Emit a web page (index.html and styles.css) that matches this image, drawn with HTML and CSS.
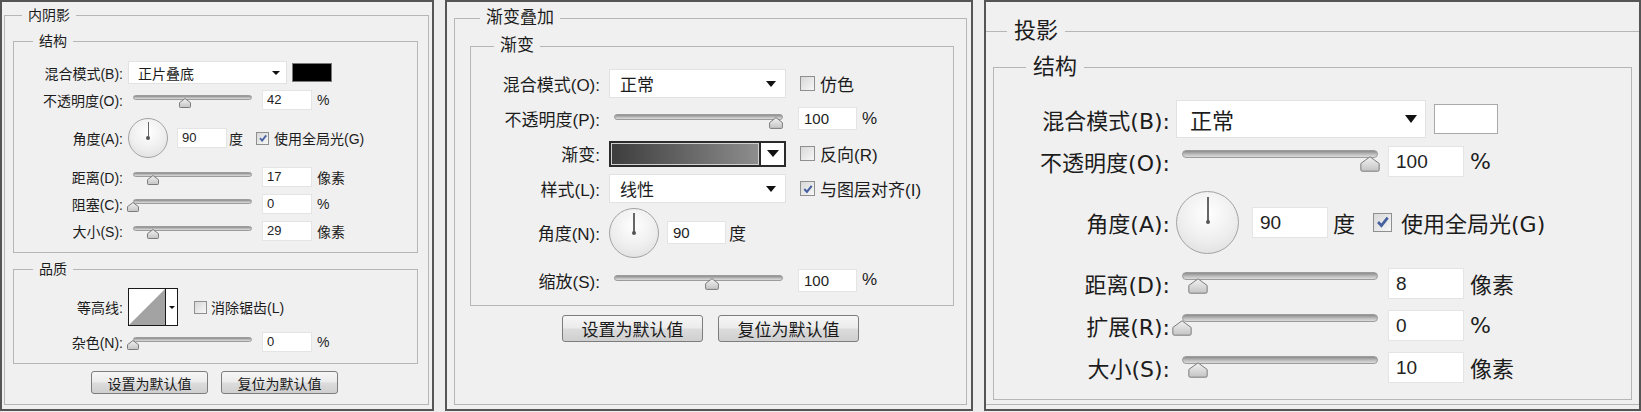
FILE: index.html
```html
<!DOCTYPE html>
<html lang="zh-CN">
<head>
  <meta charset="UTF-8">
  <meta name="viewport" content="width=device-width, initial-scale=1.0">
  <title>图层样式</title>
  <link rel="stylesheet" href="styles.css">
</head>
<body>

  <svg class="defs" width="0" height="0" aria-hidden="true">
    <linearGradient id="thumbFill" x1="0" y1="0" x2="0" y2="1">
      <stop offset="0" stop-color="#f2f2f2"/>
      <stop offset="1" stop-color="#c4c4c4"/>
    </linearGradient>
  </svg>

  <div class="page">

    <!-- 内阴影 -->
    <section class="panel pa">
      <fieldset class="group outer">
        <legend>内阴影</legend>

        <fieldset class="group sub sub-first">
          <legend>结构</legend>
          <div class="row">
            <label class="lbl">混合模式(B):</label>
            <div class="select"><span>正片叠底</span><i class="caret"></i></div>
            <span class="swatch swatch-black"></span>
          </div>
          <div class="row">
            <label class="lbl">不透明度(O):</label>
            <div class="slider"><span class="track"></span><svg class="thumb" style="left:44%" viewBox="0 0 14 12" preserveAspectRatio="none"><path d="M7 0.6 L13.4 5.6 V10.4 Q13.4 11.4 12.4 11.4 H1.6 Q0.6 11.4 0.6 10.4 V5.6 Z"/></svg></div>
            <span class="num">42</span><span class="unit">%</span>
          </div>
          <div class="row row-dial">
            <label class="lbl">角度(A):</label>
            <span class="dial"></span>
            <span class="num num-angle">90</span><span class="unit unit-deg">度</span>
            <span class="chk"><svg viewBox="0 0 10 10"><path d="M2 5.2 L4.2 7.6 L8.3 2.4"/></svg></span><span class="chk-text">使用全局光(G)</span>
          </div>
          <div class="row">
            <label class="lbl">距离(D):</label>
            <div class="slider"><span class="track"></span><svg class="thumb" style="left:17%" viewBox="0 0 14 12" preserveAspectRatio="none"><path d="M7 0.6 L13.4 5.6 V10.4 Q13.4 11.4 12.4 11.4 H1.6 Q0.6 11.4 0.6 10.4 V5.6 Z"/></svg></div>
            <span class="num">17</span><span class="unit">像素</span>
          </div>
          <div class="row">
            <label class="lbl">阻塞(C):</label>
            <div class="slider"><span class="track"></span><svg class="thumb" style="left:0%" viewBox="0 0 14 12" preserveAspectRatio="none"><path d="M7 0.6 L13.4 5.6 V10.4 Q13.4 11.4 12.4 11.4 H1.6 Q0.6 11.4 0.6 10.4 V5.6 Z"/></svg></div>
            <span class="num">0</span><span class="unit">%</span>
          </div>
          <div class="row">
            <label class="lbl">大小(S):</label>
            <div class="slider"><span class="track"></span><svg class="thumb" style="left:17%" viewBox="0 0 14 12" preserveAspectRatio="none"><path d="M7 0.6 L13.4 5.6 V10.4 Q13.4 11.4 12.4 11.4 H1.6 Q0.6 11.4 0.6 10.4 V5.6 Z"/></svg></div>
            <span class="num">29</span><span class="unit">像素</span>
          </div>
        </fieldset>

        <fieldset class="group sub sub-quality">
          <legend>品质</legend>
          <div class="row row-contour">
            <label class="lbl">等高线:</label>
            <div class="contour">
              <svg class="contour-curve" viewBox="0 0 36 36" preserveAspectRatio="none"><polygon points="0,36 36,0 36,36" fill="#a3a3a3"/></svg>
              <span class="contour-drop"><i class="caret"></i></span>
            </div>
            <span class="chk chk-off chk-contour"></span><span class="chk-text chk-text-contour">消除锯齿(L)</span>
          </div>
          <div class="row">
            <label class="lbl">杂色(N):</label>
            <div class="slider"><span class="track"></span><svg class="thumb" style="left:0%" viewBox="0 0 14 12" preserveAspectRatio="none"><path d="M7 0.6 L13.4 5.6 V10.4 Q13.4 11.4 12.4 11.4 H1.6 Q0.6 11.4 0.6 10.4 V5.6 Z"/></svg></div>
            <span class="num">0</span><span class="unit">%</span>
          </div>
        </fieldset>

        <div class="buttons">
          <button class="btn">设置为默认值</button>
          <button class="btn">复位为默认值</button>
        </div>
      </fieldset>
    </section>

    <!-- 渐变叠加 -->
    <section class="panel pb">
      <fieldset class="group outer">
        <legend>渐变叠加</legend>

        <fieldset class="group sub sub-first">
          <legend>渐变</legend>
          <div class="row">
            <label class="lbl">混合模式(O):</label>
            <div class="select"><span>正常</span><i class="caret"></i></div>
            <span class="chk chk-off"></span><span class="chk-text">仿色</span>
          </div>
          <div class="row">
            <label class="lbl">不透明度(P):</label>
            <div class="slider"><span class="track"></span><svg class="thumb" style="left:96%" viewBox="0 0 14 12" preserveAspectRatio="none"><path d="M7 0.6 L13.4 5.6 V10.4 Q13.4 11.4 12.4 11.4 H1.6 Q0.6 11.4 0.6 10.4 V5.6 Z"/></svg></div>
            <span class="num">100</span><span class="unit">%</span>
          </div>
          <div class="row">
            <label class="lbl">渐变:</label>
            <div class="grad"><span class="grad-bar"></span><span class="grad-drop"><i class="caret"></i></span></div>
            <span class="chk chk-off"></span><span class="chk-text">反向(R)</span>
          </div>
          <div class="row">
            <label class="lbl">样式(L):</label>
            <div class="select"><span>线性</span><i class="caret"></i></div>
            <span class="chk"><svg viewBox="0 0 10 10"><path d="M2 5.2 L4.2 7.6 L8.3 2.4"/></svg></span><span class="chk-text">与图层对齐(I)</span>
          </div>
          <div class="row row-dial">
            <label class="lbl">角度(N):</label>
            <span class="dial"></span>
            <span class="num num-angle">90</span><span class="unit unit-deg">度</span>
          </div>
          <div class="row row-loose">
            <label class="lbl">缩放(S):</label>
            <div class="slider"><span class="track"></span><svg class="thumb" style="left:58%" viewBox="0 0 14 12" preserveAspectRatio="none"><path d="M7 0.6 L13.4 5.6 V10.4 Q13.4 11.4 12.4 11.4 H1.6 Q0.6 11.4 0.6 10.4 V5.6 Z"/></svg></div>
            <span class="num">100</span><span class="unit">%</span>
          </div>
        </fieldset>

        <div class="buttons">
          <button class="btn">设置为默认值</button>
          <button class="btn">复位为默认值</button>
        </div>
      </fieldset>
    </section>

    <!-- 投影 -->
    <section class="panel pc">
      <fieldset class="group outer">
        <legend>投影</legend>

        <fieldset class="group sub sub-first">
          <legend>结构</legend>
          <div class="row">
            <label class="lbl">混合模式(B):</label>
            <div class="select"><span>正常</span><i class="caret"></i></div>
            <span class="swatch swatch-white"></span>
          </div>
          <div class="row">
            <label class="lbl">不透明度(O):</label>
            <div class="slider"><span class="track"></span><svg class="thumb" style="left:96%" viewBox="0 0 14 12" preserveAspectRatio="none"><path d="M7 0.6 L13.4 5.6 V10.4 Q13.4 11.4 12.4 11.4 H1.6 Q0.6 11.4 0.6 10.4 V5.6 Z"/></svg></div>
            <span class="num">100</span><span class="unit">%</span>
          </div>
          <div class="row row-dial">
            <label class="lbl">角度(A):</label>
            <span class="dial"></span>
            <span class="num num-angle">90</span><span class="unit unit-deg">度</span>
            <span class="chk"><svg viewBox="0 0 10 10"><path d="M2 5.2 L4.2 7.6 L8.3 2.4"/></svg></span><span class="chk-text">使用全局光(G)</span>
          </div>
          <div class="row">
            <label class="lbl">距离(D):</label>
            <div class="slider"><span class="track"></span><svg class="thumb" style="left:8%" viewBox="0 0 14 12" preserveAspectRatio="none"><path d="M7 0.6 L13.4 5.6 V10.4 Q13.4 11.4 12.4 11.4 H1.6 Q0.6 11.4 0.6 10.4 V5.6 Z"/></svg></div>
            <span class="num">8</span><span class="unit">像素</span>
          </div>
          <div class="row">
            <label class="lbl">扩展(R):</label>
            <div class="slider"><span class="track"></span><svg class="thumb" style="left:0%" viewBox="0 0 14 12" preserveAspectRatio="none"><path d="M7 0.6 L13.4 5.6 V10.4 Q13.4 11.4 12.4 11.4 H1.6 Q0.6 11.4 0.6 10.4 V5.6 Z"/></svg></div>
            <span class="num">0</span><span class="unit">%</span>
          </div>
          <div class="row">
            <label class="lbl">大小(S):</label>
            <div class="slider"><span class="track"></span><svg class="thumb" style="left:8%" viewBox="0 0 14 12" preserveAspectRatio="none"><path d="M7 0.6 L13.4 5.6 V10.4 Q13.4 11.4 12.4 11.4 H1.6 Q0.6 11.4 0.6 10.4 V5.6 Z"/></svg></div>
            <span class="num">10</span><span class="unit">像素</span>
          </div>
        </fieldset>
      </fieldset>
    </section>

  </div>
</body>
</html>
```

FILE: styles.css
```css
body {
  margin: 0;
  background-color: #ededed;
  font-family: "Liberation Sans", "Noto Sans CJK SC", sans-serif;
  color: #1c1c1c;
}

.defs {
  position: absolute;
  width: 0;
  height: 0;
}

.page {
  display: flex;
  gap: 11px;
  height: 412px;
}

/* panel sizes */

.panel {
  box-sizing: border-box;
  height: 411px;
  border: 2px solid #555;
  background-color: #f0f0f0;
  display: flex;
  flex-direction: column;
  font-size: var(--fs);
}

.pa {
  width: 434px;
  --fs: 14px;
  --lg-pad: 6px;
  --lg-lh: 20px;
  --row: 27px;
  --row-dial: 50px;
  --lbl: 109px;
  --ml: 5px;
  --sel-w: 159px;
  --sel-h: 23px;
  --sel-pl: 9px;
  --sel-pr: 6px;
  --caret-w: 4px;
  --caret-h: 4px;
  --sw-ml: 5px;
  --sl-ml: 10px;
  --sl-w: 119px;
  --sl-h: 16px;
  --tr-top: 3px;
  --tr-h: 5px;
  --th-top: 6px;
  --th-w: 12px;
  --th-h: 10px;
  --num-w: 50px;
  --num-h: 20px;
  --num-fs: 13px;
  --num-pad: 4px;
  --num-ml: 10px;
  --unit-ml: 5px;
  --dial: 40px;
  --needle: 1px;
  --ang-ml: 9px;
  --deg-ml: 2px;
  --chk: 13px;
  --chk-ml: 13px;
  --chk-tx-ml: 5px;
  --btn-w: 117px;
  --btn-h: 23px;
  --btn-fs: 14px;
  --btn-gap: 13px;
}

.pb {
  width: 528px;
  --fs: 17px;
  --lg-pad: 6px;
  --lg-lh: 22px;
  --row: 35px;
  --row-dial: 53px;
  --row-loose: 42px;
  --lbl: 129px;
  --ml: 9px;
  --sel-w: 177px;
  --sel-h: 29px;
  --sel-pl: 10px;
  --sel-pr: 9px;
  --caret-w: 5px;
  --caret-h: 6px;
  --sl-ml: 14px;
  --sl-w: 169px;
  --sl-h: 20px;
  --tr-top: 5px;
  --tr-h: 6px;
  --th-top: 8px;
  --th-w: 14px;
  --th-h: 12px;
  --num-w: 59px;
  --num-h: 23px;
  --num-fs: 15px;
  --num-pad: 5px;
  --num-ml: 15px;
  --unit-ml: 5px;
  --dial: 50px;
  --needle: 2px;
  --ang-ml: 8px;
  --deg-ml: 3px;
  --chk: 15px;
  --chk-ml: 14px;
  --chk-tx-ml: 5px;
  --btn-w: 141px;
  --btn-h: 27px;
  --btn-fs: 17px;
  --btn-gap: 15px;
}

.pc {
  width: 657px;
  font-family: "DejaVu Sans", "Noto Sans CJK SC", sans-serif;
  --fs: 22px;
  --lg-pad: 7px;
  --lg-lh: 28px;
  --row: 42px;
  --row-dial: 80px;
  --lbl: 176px;
  --ml: 6px;
  --sel-w: 250px;
  --sel-h: 38px;
  --sel-pl: 13px;
  --sel-pr: 8px;
  --caret-w: 6px;
  --caret-h: 8px;
  --sw-ml: 8px;
  --sl-ml: 12px;
  --sl-w: 196px;
  --sl-h: 30px;
  --tr-top: 4px;
  --tr-h: 8px;
  --th-top: 10px;
  --th-w: 20px;
  --th-h: 16px;
  --num-w: 76px;
  --num-h: 31px;
  --num-fs: 19px;
  --num-pad: 7px;
  --num-ml: 10px;
  --unit-ml: 6px;
  --dial: 63px;
  --needle: 2px;
  --ang-ml: 13px;
  --deg-ml: 5px;
  --chk: 19px;
  --chk-ml: 18px;
  --chk-tx-ml: 9px;
}

/* group boxes */

.group {
  margin: 0;
  padding: 0;
  min-width: 0;
  border: 1px solid #b6b6b6;
}

.group > legend {
  padding: 0 var(--lg-pad);
  line-height: var(--lg-lh);
}

.outer {
  flex: 1;
}

.pa .outer { margin: 3px 3px 4px 2px; }
.pa .outer > legend { margin-left: 17px; }
.pa .sub { margin: 6px 10px 0 8px; }
.pa .sub > legend { margin-left: 19px; }
.pa .sub-first { padding: 8px 0 8px; }
.pa .sub-quality { padding: 7px 0 8px; }

.pb .outer { margin: 5px 4px 4px 7px; }
.pb .outer > legend { margin-left: 25px; }
.pb .sub { margin: 6px 12px 0 15px; padding: 9px 0 4px; }
.pb .sub > legend { margin-left: 23px; }

.pc .outer {
  margin: 15px 0 4px;
  border-left: none;
  border-right: none;
}
.pc .outer > legend { margin-left: 21px; }
.pc .sub { margin: 8px 7px 0; padding: 17px 0 11px; }
.pc .sub > legend { margin-left: 32px; }

/* rows */

.row {
  display: flex;
  align-items: center;
  height: var(--row);
  white-space: nowrap;
}

.row-dial {
  height: var(--row-dial);
}

.row-loose {
  height: var(--row-loose);
}

.row-contour {
  height: 42px;
}

.lbl {
  flex: none;
  width: var(--lbl);
  text-align: right;
}

/* dropdown */

.select {
  flex: none;
  box-sizing: border-box;
  width: var(--sel-w);
  height: var(--sel-h);
  margin-left: var(--ml);
  padding: 0 var(--sel-pr) 0 var(--sel-pl);
  background-color: #fff;
  border: 1px solid #e2e2e2;
  display: flex;
  align-items: center;
  justify-content: space-between;
}

.caret {
  width: 0;
  height: 0;
  border-left: var(--caret-w) solid transparent;
  border-right: var(--caret-w) solid transparent;
  border-top: var(--caret-h) solid #111;
}

.swatch {
  flex: none;
  box-sizing: border-box;
  margin-left: var(--sw-ml);
}

.swatch-black {
  width: 40px;
  height: 19px;
  background-color: #000;
  border: 1px solid #7a7a7a;
}

.swatch-white {
  width: 64px;
  height: 30px;
  background-color: #fff;
  border: 1px solid #a9a9a9;
}

/* slider */

.slider {
  flex: none;
  position: relative;
  width: var(--sl-w);
  height: var(--sl-h);
  margin-left: var(--sl-ml);
}

.track {
  position: absolute;
  left: 0;
  right: 0;
  top: var(--tr-top);
  height: var(--tr-h);
  box-sizing: border-box;
  border: 1px solid #9c9c9c;
  border-radius: 4px;
  background: linear-gradient(#8c8c8c, #bdbdbd 55%, #dcdcdc);
}

.thumb {
  position: absolute;
  top: var(--th-top);
  width: var(--th-w);
  height: var(--th-h);
  transform: translateX(-50%);
  overflow: visible;
}

.thumb path {
  fill: url(#thumbFill);
  stroke: #7b7b7b;
  stroke-width: 1;
  vector-effect: non-scaling-stroke;
}

/* number fields */

.num {
  flex: none;
  box-sizing: border-box;
  width: var(--num-w);
  height: var(--num-h);
  margin-left: var(--num-ml);
  padding-left: var(--num-pad);
  background-color: #fff;
  border: 1px solid #e4e4e4;
  font-family: "Liberation Sans", sans-serif;
  font-size: var(--num-fs);
  line-height: calc(var(--num-h) - 2px);
  color: #222;
}

.unit {
  margin-left: var(--unit-ml);
}

.num-angle {
  margin-left: var(--ang-ml);
}

.unit-deg {
  margin-left: var(--deg-ml);
}

/* angle dial */

.dial {
  flex: none;
  position: relative;
  box-sizing: border-box;
  width: var(--dial);
  height: var(--dial);
  margin-left: var(--ml);
  border: 1px solid #a3a3a3;
  border-radius: 50%;
  background: radial-gradient(circle at 50% 35%, #ffffff, #eeeeee 55%, #dadada);
}

.dial::before {
  content: "";
  position: absolute;
  left: 50%;
  top: 9%;
  width: var(--needle);
  height: 41%;
  margin-left: calc(var(--needle) / -2);
  background-color: #666;
}

.dial::after {
  content: "";
  position: absolute;
  left: 50%;
  top: 50%;
  width: 4px;
  height: 4px;
  margin: -2px 0 0 -2px;
  border-radius: 50%;
  background-color: #555;
}

/* checkbox */

.chk {
  flex: none;
  box-sizing: border-box;
  width: var(--chk);
  height: var(--chk);
  margin-left: var(--chk-ml);
  border: 1px solid #8e8f8f;
  background: linear-gradient(135deg, #d8d8d8, #f7f7f7);
  display: flex;
  align-items: center;
  justify-content: center;
}

.chk svg {
  width: 90%;
  height: 90%;
}

.chk svg path {
  fill: none;
  stroke: #46619f;
  stroke-width: 1.8;
}

.chk-text {
  margin-left: var(--chk-tx-ml);
}

.chk-contour {
  margin-left: 16px;
}

.chk-text-contour {
  margin-left: 4px;
}

/* contour picker */

.contour {
  flex: none;
  box-sizing: border-box;
  width: 50px;
  height: 38px;
  margin-left: var(--ml);
  border: 1px solid #1a1a1a;
  background-color: #fff;
  display: flex;
}

.contour-curve {
  width: 36px;
  height: 36px;
}

.contour-drop {
  flex: 1;
  border-left: 1px solid #1a1a1a;
  display: flex;
  align-items: center;
  justify-content: center;
  --caret-w: 3px;
  --caret-h: 3px;
}

/* gradient picker */

.grad {
  flex: none;
  box-sizing: border-box;
  width: 177px;
  height: 26px;
  margin-left: var(--ml);
  border: 2px solid #2b2b2b;
  display: flex;
  background-color: #fff;
}

.grad-bar {
  flex: 1;
  border: 1px solid #d0d0d0;
  background: linear-gradient(90deg, #3d3d3d, #8d8d8d);
}

.grad-drop {
  flex: none;
  width: 23px;
  border-left: 2px solid #2b2b2b;
  display: flex;
  align-items: center;
  justify-content: center;
  --caret-w: 6px;
  --caret-h: 7px;
}

/* buttons */

.buttons {
  display: flex;
  justify-content: center;
  gap: var(--btn-gap);
}

.pa .buttons { margin-top: 7px; margin-right: 4px; }
.pb .buttons { margin-top: 9px; }

.btn {
  width: var(--btn-w);
  height: var(--btn-h);
  padding: 0;
  font-family: inherit;
  font-size: var(--btn-fs);
  color: #1a1a1a;
  border: 1px solid #7d7d7d;
  border-radius: 3px;
  background: linear-gradient(#f6f6f6, #ebebeb 48%, #dcdcdc 52%, #cfcfcf);
}
```
